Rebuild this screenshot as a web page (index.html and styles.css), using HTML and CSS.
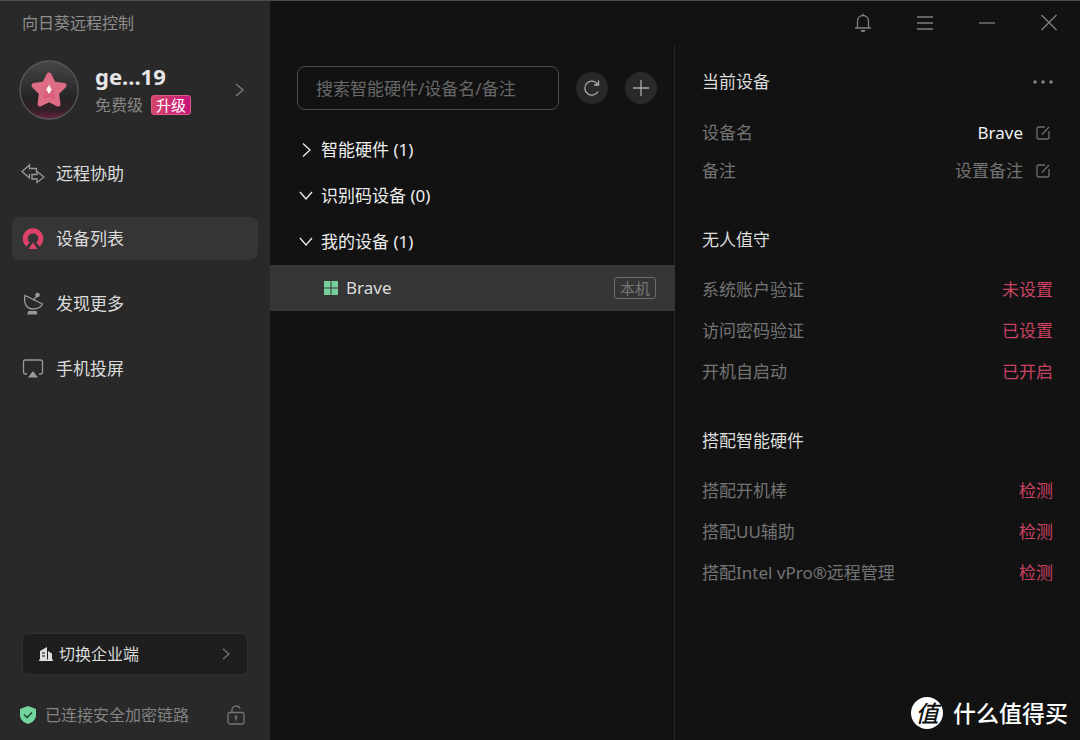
FILE: index.html
```html
<!DOCTYPE html>
<html lang="zh-CN">
<head>
<meta charset="utf-8">
<meta name="viewport" content="width=device-width, initial-scale=1">
<title>向日葵远程控制</title>
<link rel="stylesheet" href="styles.css">
</head>
<body>
<div class="app">
  <aside class="sidebar">
    <h1 class="brand">向日葵远程控制</h1>
    <section class="profile">
      <svg class="avatar" viewBox="0 0 60 60" aria-hidden="true">
        <defs>
          <linearGradient id="disc" x1="0" y1="0" x2="0" y2="1"><stop offset="0" stop-color="#484848"/><stop offset=".65" stop-color="#242324"/><stop offset=".86" stop-color="#35202a"/><stop offset="1" stop-color="#6d2440"/></linearGradient>
          <linearGradient id="star" x1="0" y1="0" x2="0" y2="1"><stop offset="0" stop-color="#dc7f90"/><stop offset="1" stop-color="#da4f72"/></linearGradient>
        </defs>
        <circle cx="30" cy="30" r="29" fill="url(#disc)" stroke="#58565a"/>
        <path d="M30 15l4.500 9 10.500 1.500-7.500 7.500 1.500 11L30 39.500 21 44l1.500-11-7.500-7.500L25.500 24z" fill="url(#star)" stroke="#dd6c84" stroke-width="5" stroke-linejoin="round"/>
        <path d="M30 26l2 3.500-2 3.500-2-3.500z" fill="#fff0ef" stroke="#fff0ef" stroke-linejoin="round"/>
      </svg>
      <div class="who">
        <strong class="name">ge...19</strong>
        <div class="plan"><span>免费级</span><button class="upgrade">升级</button></div>
      </div>
      <button class="icon-btn" aria-label="账户详情"><svg width="12" height="16" viewBox="0 0 12 16"><path d="M2 2l7 6-7 6"/></svg></button>
    </section>
    <nav class="menu">
      <a class="menu-item" href="#assist"><svg width="24" height="24" viewBox="0 0 24 24"><path d="M15.500 10V6.500H8.500V3L1 9.500 8.500 16v-4M11 12.500h5V9.500l7 5.500-7 5.500v-3.500h-5z"/></svg>远程协助</a>
      <a class="menu-item active" href="#devices" aria-current="page"><svg width="24" height="24" viewBox="0 0 24 24"><path class="pink-ring" d="M7 17.500a7.800 7.800 0 1 1 10 0"/><path class="pink-fill" d="M12 15.500l4.500 6.500h-9z"/></svg>设备列表</a>
      <a class="menu-item" href="#discover"><svg width="24" height="24" viewBox="0 0 24 24"><path d="M4 3.500C2.500 10.500 5 17 12 17c4.500 0 8-2 9.500-5zM12 8.500l4-4.500"/><circle class="solid" cx="16.500" cy="3" r="2.300"/><path class="solid" d="M7.500 19h8l1 3.500H6z"/></svg>发现更多</a>
      <a class="menu-item" href="#cast"><svg width="24" height="24" viewBox="0 0 24 24"><path d="M6 17H4.500q-2 0-2-2V5q0-2 2-2h15q2 0 2 2v10q0 2-2 2H18"/><path class="solid" d="M12 14l5 6.500H7z"/></svg>手机投屏</a>
    </nav>
    <footer class="side-foot">
      <button class="switch"><svg width="16" height="16" viewBox="0 0 16 16"><path fill="#dedede" stroke="none" d="M2 14V5l7-4v13zM10 14V5l4 2.500V14zM1 13.500h14V15H1z"/><path d="M4 7h3M4 10h3" stroke="#555"/></svg><span>切换企业端</span><svg class="chev" width="10" height="14" viewBox="0 0 10 14"><path d="M2 2l6 5-6 5"/></svg></button>
      <div class="secure">
        <svg width="18" height="18" viewBox="0 0 18 18"><path d="M9 0l8 3v6c0 4.500-3 7-8 9-5-2-8-4.500-8-9V3z" fill="#72d69c" stroke="none"/><path d="M5 8.500L8 11.500l5-5" stroke="#214a33" stroke-width="1.600"/></svg>
        <span>已连接安全加密链路</span>
        <svg class="lock" width="18" height="20" viewBox="0 0 18 20"><rect x="1" y="7.500" width="16" height="11.500" rx="2"/><path d="M5 7.500V5c0-5 7-5 8-1.500M9 12v3.500"/><circle cx="9" cy="12" r=".8"/></svg>
      </div>
    </footer>
  </aside>

  <div class="content">
    <div class="window-bar">
      <button class="icon-btn" aria-label="通知"><svg width="20" height="22" viewBox="0 0 20 22"><path d="M2 16h16M4.500 16V9.500c0-8 11-8 11 0V16M10 1.500v2"/><path class="solid" d="M7.500 18h5c-.5 3-4.500 3-5 0z"/></svg></button>
      <button class="icon-btn" aria-label="菜单"><svg width="20" height="22" viewBox="0 0 20 22"><path d="M2 5h16M2 11h16M2 17h16"/></svg></button>
      <button class="icon-btn" aria-label="最小化"><svg width="20" height="22" viewBox="0 0 20 22"><path d="M2 11h16"/></svg></button>
      <button class="icon-btn" aria-label="关闭"><svg width="20" height="22" viewBox="0 0 20 22"><path d="M2.500 3l15 15M17.500 3l-15 15"/></svg></button>
    </div>
    <div class="panes">
      <main class="devices">
        <div class="tools">
          <input class="search" type="text" aria-label="搜索" placeholder="搜索智能硬件/设备名/备注">
          <button class="round" aria-label="刷新"><svg width="20" height="20" viewBox="0 0 20 20"><path d="M15.500 6A7 7 0 1 0 16 13.500M16.500 2.500V7H12"/></svg></button>
          <button class="round" aria-label="添加"><svg width="20" height="20" viewBox="0 0 20 20"><path d="M10 2v16M2 10h16"/></svg></button>
        </div>
        <button class="group" aria-expanded="false"><svg width="16" height="16" viewBox="0 0 16 16"><path d="M5 1.500l7 6.500-7 6.500"/></svg>智能硬件 (1)</button>
        <button class="group" aria-expanded="true"><svg width="16" height="16" viewBox="0 0 16 16"><path d="M2 4l6 7 6-7"/></svg>识别码设备 (0)</button>
        <button class="group" aria-expanded="true"><svg width="16" height="16" viewBox="0 0 16 16"><path d="M2 4l6 7 6-7"/></svg>我的设备 (1)</button>
        <button class="device"><svg width="14" height="14" viewBox="0 0 14 14"><path d="M0 0h6.500v6.500H0zM7.500 0H14v6.500H7.500zM0 7.500h6.500V14H0zM7.500 7.500H14V14H7.500z" fill="#76cf9b" stroke="none"/></svg><span>Brave</span><span class="tag">本机</span></button>
      </main>
      <section class="details">
        <section class="block">
          <div class="head"><h2>当前设备</h2><button class="icon-btn" aria-label="更多"><svg width="22" height="8" viewBox="0 0 22 8"><g class="solid"><circle cx="3" cy="4" r="1.800"/><circle cx="11" cy="4" r="1.800"/><circle cx="19" cy="4" r="1.800"/></g></svg></button></div>
          <dl class="rows compact">
            <div class="row"><dt>设备名</dt><dd><span class="bright">Brave</span><button class="icon-btn edit" aria-label="编辑设备名"><svg width="16" height="16" viewBox="0 0 16 16"><path d="M10 2H4Q2 2 2 4v8q0 2 2 2h8q2 0 2-2V6M7 9.500L14 2"/></svg></button></dd></div>
            <div class="row"><dt>备注</dt><dd><span>设置备注</span><button class="icon-btn edit" aria-label="编辑备注"><svg width="16" height="16" viewBox="0 0 16 16"><path d="M10 2H4Q2 2 2 4v8q0 2 2 2h8q2 0 2-2V6M7 9.500L14 2"/></svg></button></dd></div>
          </dl>
        </section>
        <section class="block">
          <h2>无人值守</h2>
          <dl class="rows">
            <div class="row"><dt>系统账户验证</dt><dd><a href="#account">未设置</a></dd></div>
            <div class="row"><dt>访问密码验证</dt><dd><a href="#password">已设置</a></dd></div>
            <div class="row"><dt>开机自启动</dt><dd><a href="#autostart">已开启</a></dd></div>
          </dl>
        </section>
        <section class="block">
          <h2>搭配智能硬件</h2>
          <dl class="rows">
            <div class="row"><dt>搭配开机棒</dt><dd><a href="#stick">检测</a></dd></div>
            <div class="row"><dt>搭配UU辅助</dt><dd><a href="#uu">检测</a></dd></div>
            <div class="row"><dt>搭配Intel vPro®远程管理</dt><dd><a href="#vpro">检测</a></dd></div>
          </dl>
        </section>
      </section>
    </div>
  </div>
  <div class="watermark"><span class="seal">值</span><span>什么值得买</span></div>
</div>
</body>
</html>
```
FILE: styles.css
```css
* { box-sizing: border-box; }
body {
  margin: 0;
  background: #121212;
  color: #dcdcdc;
  font: 17px/24px "Noto Sans", "Noto Sans CJK SC", sans-serif;
}
button, input { font: inherit; color: inherit; }
button { margin: 0; padding: 0; border: 0; background: none; text-align: left; }
a { color: inherit; text-decoration: none; }
h1, h2, dl, dd { margin: 0; font: inherit; }
svg { display: block; flex: none; fill: none; stroke: currentColor; stroke-width: 1.3; }
.solid { fill: currentColor; stroke: none; }
.app { position: relative; display: flex; min-height: 100vh; border-top: 1px solid #4b4f52; }
.sidebar { display: flex; flex-direction: column; flex: 0 0 25%; background: #292929; }
.brand { padding: 10px 22px; color: #8e8e8e; font-size: 16px; }
.profile { display: flex; align-items: center; gap: 16px; padding: 15px 24px 0 19px; }
.avatar { width: 60px; height: 60px; }
.who { flex: 1; }
.name { display: block; font-size: 22px; line-height: 30px; font-weight: 700; color: #e6e6e6; }
.plan { display: flex; align-items: center; gap: 8px; color: #868686; font-size: 16px; line-height: 28px; }
.upgrade { padding: 0 4px; border-radius: 3px; border: 1px solid #de5b86; background: linear-gradient(90deg, #d4476b, #c5147b); color: #fff; font-size: 15px; line-height: 18px; }
.icon-btn { color: #808080; }
.menu { display: flex; flex-direction: column; gap: 22px; padding: 32px 12px 0; }
.menu-item { display: flex; align-items: center; gap: 11px; height: 43px; padding: 0 9px; border-radius: 8px; }
.menu-item svg { color: #9a9a9a; }
.active { background: #353535; }
.pink-ring { stroke: #dc4268; stroke-width: 5; }
.pink-fill { fill: #dc4268; stroke: none; }
.side-foot { margin-top: auto; padding: 0 22px 13px; }
.switch { display: flex; align-items: center; gap: 5px; width: 100%; height: 42px; padding: 0 16px 0 15px; border: 1px solid #303030; border-radius: 6px; background: #1e1e1e; font-size: 16px; }
.chev, .lock { margin-left: auto; color: #747474; }
.secure { display: flex; align-items: center; gap: 8px; margin: 28px 3px 0 -3px; color: #828282; font-size: 16px; }
.content { display: flex; flex-direction: column; flex: 1; min-width: 0; }
.window-bar { display: flex; justify-content: flex-end; align-items: center; gap: 42px; height: 44px; padding: 0 21px 1px 0; }
.panes { display: flex; flex: 1; }
.devices { display: flex; flex-direction: column; flex: 0 0 50%; min-width: 0; border-right: 1px solid #262626; }
.tools { display: flex; align-items: center; gap: 17px; padding: 21px 17px 17px 27px; }
.search { flex: 1; min-width: 0; height: 44px; padding: 0 18px; border: 1px solid #4c4c4c; border-radius: 8px; background: transparent; outline: 0; }
.search::placeholder { color: #686868; opacity: 1; }
.round { display: grid; place-items: center; width: 32px; height: 32px; border-radius: 50%; background: #292929; color: #aaa; }
.group { display: flex; align-items: center; gap: 7px; height: 46px; padding: 0 28px; color: #eee; }
.device { display: flex; align-items: center; gap: 8px; height: 46px; padding: 0 19px 0 54px; margin-right: -1px; background: #353535; }
.tag { margin-left: auto; padding: 0 5px; border: 1px solid #6b6b6b; border-radius: 3px; color: #777; font-size: 15px; line-height: 20px; }
.details { flex: 1; min-width: 0; padding: 25px 27px 90px 27px; }
.block { margin-bottom: 45px; }
.head { display: flex; justify-content: space-between; align-items: center; }
.head .icon-btn { margin-right: -1px; }
.rows { display: flex; flex-direction: column; gap: 17px; padding-top: 26px; color: #747474; }
.compact { gap: 14px; padding-top: 27px; }
.row, .row dd { display: flex; align-items: center; justify-content: space-between; }
.row dd { gap: 12px; }
.row a { color: #c94262; }
.bright { color: #f0f0f0; }
.edit { padding-right: 2px; color: #6c6c6c; }
.watermark { position: absolute; right: 12px; bottom: 10px; display: flex; align-items: center; gap: 10px; color: #fff; font-size: 23px; line-height: 34px; font-weight: 500; }
.seal { width: 32px; height: 32px; border-radius: 50%; background: #fff; color: #111; text-align: center; line-height: 32px; font-style: italic; }
```
